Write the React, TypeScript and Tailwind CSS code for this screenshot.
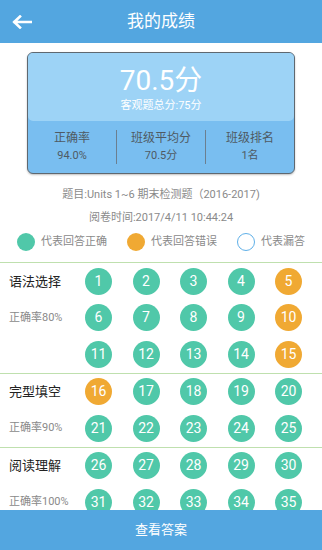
import React from "react";

type Status = "ok" | "bad";

interface Section {
  title: string;
  rate: string;
  rows: { n: number; s: Status }[][];
}

const mk = (from: number, to: number, bad: number[]) => {
  const list = [];
  for (let i = from; i <= to; i++) list.push({ n: i, s: (bad.includes(i) ? "bad" : "ok") as Status });
  const rows = [];
  for (let i = 0; i < list.length; i += 5) rows.push(list.slice(i, i + 5));
  return rows;
};

const sections: Section[] = [
  { title: "语法选择", rate: "正确率80%", rows: mk(1, 15, [5, 10, 15]) },
  { title: "完型填空", rate: "正确率90%", rows: mk(16, 25, [16]) },
  { title: "阅读理解", rate: "正确率100%", rows: mk(26, 35, []) },
];

const font = { fontFamily: 'Roboto, "Noto Sans CJK SC", sans-serif' };

function Stat({ label, value }: { label: string; value: string }) {
  return (
    <div className="flex flex-1 flex-col items-center justify-center">
      <span className="text-[12px] leading-[18px] text-[#4f5a63]">{label}</span>
      <span className="text-[11px] leading-[18px] text-[#4f5a63]">{value}</span>
    </div>
  );
}

export default function App() {
  return (
    <div className="min-h-[550px] bg-white pb-[40px]" style={font}>
      <div className="grid h-[43px] grid-cols-[44px_1fr_44px] items-center bg-[#53a6e0]">
        <svg width="20" height="14" viewBox="0 0 20 14" className="ml-[12px]">
          <path d="M19 7H2.5M8 1.5L2.2 7 8 12.5" fill="none" stroke="white" strokeWidth="2.6" strokeLinecap="square" />
        </svg>
        <div className="text-center text-[17px] text-white">我的成绩</div>
        <div />
      </div>

      <div className="mx-[27px] mt-[9px] overflow-hidden rounded-[6px] border border-[#5f6870] bg-[#79bef0] shadow-[0_1px_2px_rgba(0,0,0,0.25)]">
        <div className="flex h-[68px] flex-col items-center rounded-b-[5px] bg-[#9dd3f6] pt-[11px]">
          <span className="text-[28px] leading-[34px] text-white">70.5分</span>
          <span className="mt-[1px] text-[11px] leading-[14px] text-white">客观题总分:75分</span>
        </div>
        <div className="flex h-[52px] items-stretch py-[9px]">
          <Stat label="正确率" value="94.0%" />
          <div className="w-px bg-[#6b7f90]" />
          <Stat label="班级平均分" value="70.5分" />
          <div className="w-px bg-[#6b7f90]" />
          <Stat label="班级排名" value="1名" />
        </div>
      </div>

      <div className="mt-[9px] text-center text-[11px] leading-[23px] text-[#8a8a8a]">
        <div>题目:Units 1~6 期末检测题（2016-2017)</div>
        <div>阅卷时间:2017/4/11 10:44:24</div>
      </div>

      <div className="mt-[1px] flex h-[24px] items-center justify-center gap-[20px] text-[11px] text-[#8a8a8a]">
        <div className="flex items-center gap-[6px]">
          <span className="h-[18px] w-[18px] rounded-full bg-[#50c8a9]" />
          代表回答正确
        </div>
        <div className="flex items-center gap-[6px]">
          <span className="h-[18px] w-[18px] rounded-full bg-[#f0a933]" />
          代表回答错误
        </div>
        <div className="flex items-center gap-[6px]">
          <span className="h-[18px] w-[18px] rounded-full border border-[#5fb0e8]" />
          代表漏答
        </div>
      </div>

      <div className="mt-[8px]">
        {sections.map((sec) => (
          <div key={sec.title} className="flex border-t border-[#bfe0ae]">
            <div className="w-[85px] pl-[9px]">
              <div className="flex h-[36.5px] items-center text-[13px] text-[#222]">{sec.title}</div>
              <div className="flex h-[36.5px] items-center text-[11px] text-[#8a8a8a]">{sec.rate}</div>
            </div>
            <div>
              {sec.rows.map((row, i) => (
                <div key={i} className="flex h-[36.5px] items-center gap-[20.5px]">
                  {row.map((q) => (
                    <span
                      key={q.n}
                      className={
                        "flex h-[27px] w-[27px] items-center justify-center rounded-full text-[14px] text-white " +
                        (q.s === "bad" ? "bg-[#f0a933]" : "bg-[#50c8a9]")
                      }
                    >
                      {q.n}
                    </span>
                  ))}
                </div>
              ))}
            </div>
          </div>
        ))}
      </div>

      <div className="fixed inset-x-0 bottom-0 flex h-[40px] items-center justify-center bg-[#53a6e0] text-[13px] text-white">
        查看答案
      </div>
    </div>
  );
}
